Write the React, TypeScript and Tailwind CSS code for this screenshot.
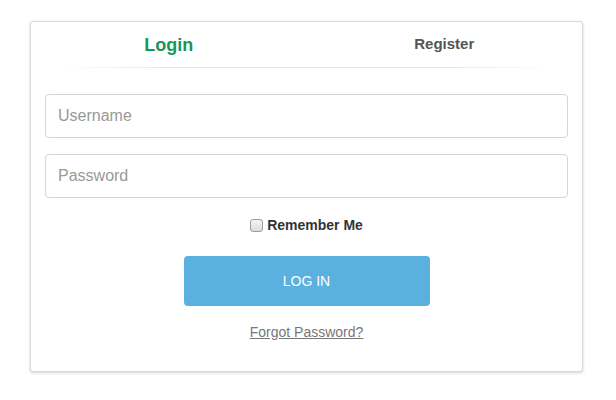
import React from "react";

export default function App() {
  return (
    <div className="w-[616px] h-[400px] bg-white pt-[21px] pl-[30px]" style={{ fontFamily: '"Liberation Sans", Arial, sans-serif' }}>
      <div className="w-[553px] h-[351px] border border-[#d9d9d9] rounded-[3px] shadow-[0_1px_3px_rgba(0,0,0,0.18)] bg-white flex flex-col">
        <div className="flex h-[45px]">
          <div className="flex-1 flex items-center justify-center pt-[1px]">
            <span className="text-[18px] font-bold text-[#17955a]">Login</span>
          </div>
          <div className="flex-1 flex items-center justify-center pb-[1px]">
            <span className="text-[15px] font-bold text-[#555555]">Register</span>
          </div>
        </div>
        <div className="h-px mx-[30px] bg-[linear-gradient(to_right,rgba(230,230,230,0),#e8e8e8_20%,#e8e8e8_80%,rgba(230,230,230,0))]" />
        <div className="px-[14px] pt-[26px] flex flex-col gap-[16px]">
          <div className="h-[44px] border border-[#d4d4d4] rounded-[4px] flex items-center px-[12px]">
            <span className="text-[16px] text-[#999999]">Username</span>
          </div>
          <div className="h-[44px] border border-[#d4d4d4] rounded-[4px] flex items-center px-[12px]">
            <span className="text-[16px] text-[#999999]">Password</span>
          </div>
        </div>
        <div className="flex items-center justify-center mt-[17px] gap-[4px]">
          <span className="w-[13px] h-[13px] border border-[#9a9a9a] rounded-[3px] bg-[linear-gradient(#f4f4f4,#dcdcdc)]" />
          <span className="text-[14px] font-bold text-[#333333]">Remember Me</span>
        </div>
        <div className="flex justify-center mt-[20px]">
          <div className="w-[246px] h-[50px] rounded-[4px] bg-[#5ab1e0] flex items-center justify-center">
            <span className="text-[14px] text-white">LOG IN</span>
          </div>
        </div>
        <div className="flex justify-center mt-[16px]">
          <span className="text-[14px] text-[#777777] underline">Forgot Password?</span>
        </div>
      </div>
    </div>
  );
}
